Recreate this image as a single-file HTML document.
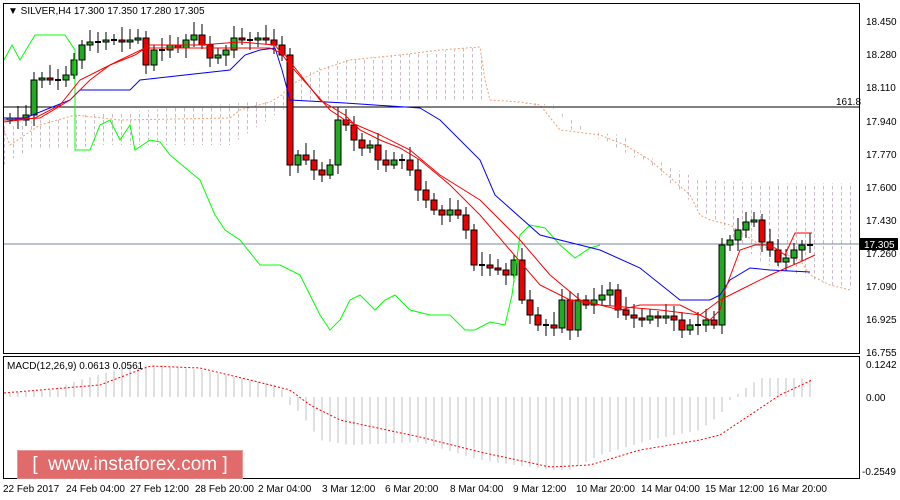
<!DOCTYPE html>
<html><head><meta charset="utf-8"><style>
body{margin:0;width:900px;height:500px;background:#fff;overflow:hidden;font-family:"Liberation Sans",sans-serif}
svg{position:absolute;left:0;top:0}
text{font-family:"Liberation Sans",sans-serif;font-size:10px;fill:#000}
.wm{position:absolute;left:17px;top:450px;width:226px;height:29px;background:rgba(222,90,90,0.9);color:#fff;font-size:19px;line-height:29px;white-space:pre;text-align:center;box-shadow:inset 0 0 0 1px rgba(255,255,255,0.3)}
</style></head><body>
<svg id="s" width="900" height="500" xmlns="http://www.w3.org/2000/svg">
<defs>
<pattern id="h" width="9" height="6" patternUnits="userSpaceOnUse"><line x1="4.5" y1="0" x2="4.5" y2="3.5" stroke="#c8bcc8" stroke-width="1"/></pattern>
</defs>
<rect x="0" y="0" width="900" height="500" fill="#fff"/>
<polygon points="4,125 80,115 280,100 300,75 340,60 480,47 488,100 560,105 565,130 625,135 630,148 700,180 760,183 860,183 860,290 830,285 810,278 760,262 720,225 700,210 650,165 600,140 560,110 520,103 490,100 350,100 300,100 290,105 230,145 100,145 60,150 30,150 10,160 4,165" fill="url(#h)"/>
<polyline fill="none" stroke="#f4a070" stroke-dasharray="2,2" points="4,130 10,145 40,125 75,115 120,120 230,118 240,110 270,102 282,95 290,85 320,70 350,60 400,55 440,50 480,47 485,80 490,100 520,102 540,105 560,130 600,135 625,145 650,160 690,195 700,215 710,220 730,225 760,245 800,260 810,275 830,285 850,290"/>
<line x1="4" y1="107" x2="860" y2="107" stroke="#000"/>
<line x1="4" y1="244" x2="860" y2="244" stroke="#778899"/>
<g id="c"></g>
<polyline fill="none" stroke="#00ff00" points="4,60 12,45 20,60 35,35 65,35 75,50 75,150 90,150 100,125 110,120 120,140 130,125 135,150 150,140 160,142 170,155 200,180 215,215 225,230 240,240 260,265 280,265 300,275 310,295 320,315 330,330 340,320 350,300 360,295 375,310 385,300 395,295 410,310 430,315 450,315 465,330 475,330 490,322 505,325 512,295 520,235 530,225 545,228 560,245 575,258 590,248 600,245"/>
<polyline fill="none" stroke="#0000ff" points="4,118 25,118 70,100 80,90 130,90 140,80 230,70 245,55 260,50 275,48 282,70 290,100 345,103 420,108 440,120 480,160 495,195 540,235 600,250 640,268 680,300 710,300 720,295 730,280 750,268 770,270 810,272"/>
<polyline fill="none" stroke="#ff0000" points="4,120 40,118 70,100 90,80 110,65 135,55 150,45 200,45 240,42 275,45 290,65 330,110 345,120 380,135 410,150 440,175 480,200 520,240 550,275 580,300 600,305 660,310 700,315 720,300 740,290 770,275 800,262 815,255"/>
<polyline fill="none" stroke="#ff0000" points="4,122 35,118 60,105 80,80 120,60 145,48 270,48 285,55 320,100 345,115 360,130 380,140 400,148 420,160 450,185 480,215 510,250 540,285 570,300 600,305 620,310 640,305 680,305 710,320 720,310 725,290 740,250 755,245 765,245 775,248 785,255 795,233 812,233"/>
<g id="m"></g>
<polyline id="sig" fill="none" stroke="#ff0000" stroke-dasharray="2,2"/>
<rect x="3.5" y="3.5" width="856" height="350" fill="none" stroke="#000"/>
<rect x="3.5" y="356.5" width="856" height="122" fill="none" stroke="#000"/>
<text x="8" y="14">▼ SILVER,H4  17.300 17.350 17.280 17.305</text>
<text x="836" y="105">161.8</text>
<text x="7" y="369">MACD(12,26,9) 0.0613 0.0561</text>
<g text-anchor="start">
<text x="866" y="25">18.450</text><text x="866" y="58">18.280</text><text x="866" y="91">18.110</text><text x="866" y="125">17.940</text><text x="866" y="158">17.770</text><text x="866" y="191">17.600</text><text x="866" y="224">17.430</text><text x="866" y="257">17.260</text><text x="866" y="290">17.090</text><text x="866" y="323">16.925</text><text x="866" y="356">16.755</text>
<text x="866" y="368">0.1242</text><text x="866" y="401">0.00</text><text x="862" y="475">-0.2549</text>
</g>
<rect x="860" y="238" width="38" height="12" fill="#000"/>
<text x="864" y="248" style="fill:#fff">17.305</text>
<g>
<text x="3" y="492">22 Feb 2017</text><text x="66" y="492">24 Feb 04:00</text><text x="130" y="492">27 Feb 12:00</text><text x="195" y="492">28 Feb 20:00</text><text x="258" y="492">2 Mar 04:00</text><text x="322" y="492">3 Mar 12:00</text><text x="385" y="492">6 Mar 20:00</text><text x="450" y="492">8 Mar 04:00</text><text x="513" y="492">9 Mar 12:00</text><text x="576" y="492">10 Mar 20:00</text><text x="641" y="492">14 Mar 04:00</text><text x="705" y="492">15 Mar 12:00</text><text x="768" y="492">16 Mar 20:00</text>
</g>
</svg>
<div class="wm">[  www.instaforex.com ]</div>
<script>
var NS="http://www.w3.org/2000/svg";
function el(p,t,a){var e=document.createElementNS(NS,t);for(var k in a)e.setAttribute(k,a[k]);p.appendChild(e);return e;}
var cl=[118,120,115,80,78,80,80,75,60,45,42,42,40,40,42,40,38,65,50,50,45,48,40,35,45,58,55,50,38,40,40,38,40,45,55,165,155,160,170,175,165,120,125,140,148,145,160,165,160,160,170,190,200,210,215,210,215,230,265,265,268,270,275,260,300,315,325,325,328,300,330,300,305,300,295,290,310,315,318,320,316,318,316,320,330,325,325,320,325,245,240,230,222,220,242,250,262,258,250,245,245];
var g=document.getElementById("c"),prev=120;
for(var i=0;i<cl.length;i++){var x=10+i*8,o=prev,c=cl[i];var t=Math.min(o,c),b=Math.max(o,c);
var w1=5+((i*7)%9),w2=4+((i*5)%8);
el(g,"line",{x1:x,y1:t-w1,x2:x,y2:b+w2,stroke:"#000"});
if(b-t<2)el(g,"line",{x1:x-3,y1:c,x2:x+3,y2:c,stroke:"#000","stroke-width":2});
else el(g,"rect",{x:x-3,y:t,width:6,height:b-t,fill:c<o?"#22aa22":"#ee0000",stroke:"#000"});
prev=c;}
function interp(pts,x){for(var j=1;j<pts.length;j++)if(x<=pts[j][0]){var a=pts[j-1],b=pts[j];return a[1]+(b[1]-a[1])*(x-a[0])/(b[0]-a[0]);}return pts[pts.length-1][1];}
var hp=[[4,393],[50,390],[80,380],[130,366],[160,365],[200,370],[250,380],[280,386],[290,405],[300,412],[320,440],[350,445],[420,442],[480,460],[550,470],[570,470],[600,455],[650,440],[700,430],[720,415],[730,400],[740,392],[760,378],[800,378],[812,380]];
var sp=[[4,393],[100,385],[150,366],[200,368],[250,380],[290,390],[310,405],[340,420],[420,437],[480,452],[550,467],[590,465],[640,450],[700,440],[720,435],[750,415],[780,395],[812,380]];
var m=document.getElementById("m");
for(var x=10;x<=812;x+=8){var y=interp(hp,x);el(m,"line",{x1:x,y1:397,x2:x,y2:y,stroke:"#c0c0c0"});}
var s="";for(var x=4;x<=812;x+=4)s+=x+","+interp(sp,x).toFixed(1)+" ";
document.getElementById("sig").setAttribute("points",s);
</script>
</body></html>
